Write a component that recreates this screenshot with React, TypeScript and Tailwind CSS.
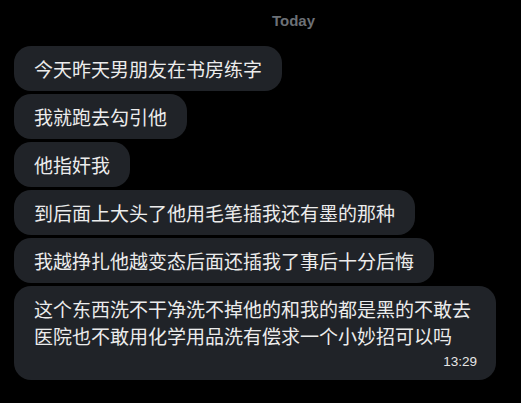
const messages = [
  "今天昨天男朋友在书房练字",
  "我就跑去勾引他",
  "他指奸我",
  "到后面上大头了他用毛笔插我还有墨的那种",
  "我越挣扎他越变态后面还插我了事后十分后悔",
];

const last = "这个东西洗不干净洗不掉他的和我的都是黑的不敢去医院也不敢用化学用品洗有偿求一个小妙招可以吗";

export default function App() {
  return (
    <div
      className="w-[521px] h-[403px] bg-black overflow-hidden"
      style={{ fontFamily: '"Noto Sans CJK SC", "Liberation Sans", sans-serif' }}
    >
      {/* Date header */}
      <div className="pt-[7px] pl-[272px] h-[46px]">
        <span
          className="text-[15px] font-bold text-[#6c7076] leading-[20px]"
          style={{ fontFamily: '"Liberation Sans", sans-serif' }}
        >
          Today
        </span>
      </div>

      <div className="flex flex-col items-start gap-[3px] pl-[14px]">
        {messages.map((m) => (
          <div
            key={m}
            className="bg-[#202328] text-[#ececec] rounded-[17px] px-5 py-[9px] text-[19px] leading-[27px]"
          >
            {m}
          </div>
        ))}

        {/* Last message with timestamp */}
        <div className="bg-[#202328] text-[#ececec] rounded-[17px] w-[482px] pl-5 pr-[19px] pt-[9px] pb-[8px] text-[19px] leading-[27px]">
          <div className="pr-1">{last}</div>
          <div
            className="flex justify-end pt-[3px] text-[13.5px] leading-[20px] text-[#e6e6e6]"
            style={{ fontFamily: '"Liberation Sans", sans-serif' }}
          >
            13:29
          </div>
        </div>
      </div>
    </div>
  );
}
